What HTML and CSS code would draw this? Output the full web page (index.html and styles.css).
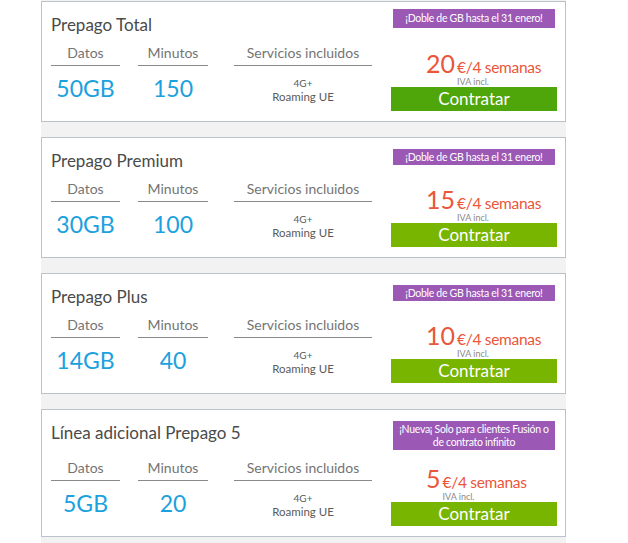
FILE: index.html
```html
<!DOCTYPE html>
<html lang="es">
<head>
<meta charset="utf-8">
<title>Tarifas Prepago</title>
<link rel="stylesheet" href="styles.css">
</head>
<body>
<div class="plans">
  <article class="plan plan--featured">
    <div class="plan-info">
      <h2 class="plan-title">Prepago Total</h2>
      <div class="specs">
        <div class="spec spec--data"><div class="spec-head">Datos</div><div class="spec-value">50GB</div></div>
        <div class="spec spec--min"><div class="spec-head">Minutos</div><div class="spec-value">150</div></div>
        <div class="spec spec--svc"><div class="spec-head">Servicios incluidos</div><div class="spec-value spec-value--list"><span class="svc-4g">4G+</span><span class="svc-roam">Roaming UE</span></div></div>
      </div>
    </div>
    <div class="plan-buy">
      <div class="promo">¡Doble de GB hasta el 31 enero!</div>
      <div class="price"><span class="price-amount">20</span><span class="price-tail"><span class="price-per">€/4 semanas</span><span class="price-vat">IVA incl.</span></span></div>
      <a class="cta" href="#">Contratar</a>
    </div>
  </article>

  <article class="plan">
    <div class="plan-info">
      <h2 class="plan-title">Prepago Premium</h2>
      <div class="specs">
        <div class="spec spec--data"><div class="spec-head">Datos</div><div class="spec-value">30GB</div></div>
        <div class="spec spec--min"><div class="spec-head">Minutos</div><div class="spec-value">100</div></div>
        <div class="spec spec--svc"><div class="spec-head">Servicios incluidos</div><div class="spec-value spec-value--list"><span class="svc-4g">4G+</span><span class="svc-roam">Roaming UE</span></div></div>
      </div>
    </div>
    <div class="plan-buy">
      <div class="promo">¡Doble de GB hasta el 31 enero!</div>
      <div class="price"><span class="price-amount">15</span><span class="price-tail"><span class="price-per">€/4 semanas</span><span class="price-vat">IVA incl.</span></span></div>
      <a class="cta" href="#">Contratar</a>
    </div>
  </article>

  <article class="plan">
    <div class="plan-info">
      <h2 class="plan-title">Prepago Plus</h2>
      <div class="specs">
        <div class="spec spec--data"><div class="spec-head">Datos</div><div class="spec-value">14GB</div></div>
        <div class="spec spec--min"><div class="spec-head">Minutos</div><div class="spec-value">40</div></div>
        <div class="spec spec--svc"><div class="spec-head">Servicios incluidos</div><div class="spec-value spec-value--list"><span class="svc-4g">4G+</span><span class="svc-roam">Roaming UE</span></div></div>
      </div>
    </div>
    <div class="plan-buy">
      <div class="promo">¡Doble de GB hasta el 31 enero!</div>
      <div class="price"><span class="price-amount">10</span><span class="price-tail"><span class="price-per">€/4 semanas</span><span class="price-vat">IVA incl.</span></span></div>
      <a class="cta" href="#">Contratar</a>
    </div>
  </article>

  <article class="plan">
    <div class="plan-info">
      <h2 class="plan-title">Línea adicional Prepago 5</h2>
      <div class="specs">
        <div class="spec spec--data"><div class="spec-head">Datos</div><div class="spec-value">5GB</div></div>
        <div class="spec spec--min"><div class="spec-head">Minutos</div><div class="spec-value">20</div></div>
        <div class="spec spec--svc"><div class="spec-head">Servicios incluidos</div><div class="spec-value spec-value--list"><span class="svc-4g">4G+</span><span class="svc-roam">Roaming UE</span></div></div>
      </div>
    </div>
    <div class="plan-buy">
      <div class="promo">¡Nueva¡ Solo para clientes Fusión o<br>de contrato infinito</div>
      <div class="price"><span class="price-amount">5</span><span class="price-tail"><span class="price-per">€/4 semanas</span><span class="price-vat">IVA incl.</span></span></div>
      <a class="cta" href="#">Contratar</a>
    </div>
  </article>
</div>
</body>
</html>
```
FILE: styles.css
```css
body {
  margin: 0;
  background: #ffffff;
  font-family: Lato, "Noto Sans", sans-serif;
}

.plans {
  margin-left: 41px;
  width: 525px;
  background: #f2f2f2;
  padding: 1px 0 6px;
  display: flex;
  flex-direction: column;
  gap: 15px;
}

.plan {
  display: flex;
  background: #ffffff;
  border: 1px solid #b9c3cd;
  min-height: 119px;
}

.plan-info {
  width: 321px;
  padding: 13px 0 18px 9px;
  display: flex;
  flex-direction: column;
}

.plan-title {
  margin: 0 0 9px;
  font-size: 17px;
  font-weight: 400;
  line-height: 20px;
  color: #4a4a4a;
}

.specs {
  display: flex;
  margin-top: auto;
}

.spec--data { width: 69px; }
.spec--min { width: 70px; margin-left: 18px; }
.spec--svc { width: 138px; margin-left: 26px; }

.spec-head {
  font-size: 14px;
  line-height: 18px;
  color: #747474;
  text-align: center;
  padding-bottom: 3px;
  border-bottom: 1px solid #8a8a8a;
}

.spec-value {
  height: 30px;
  margin-top: 7px;
  display: flex;
  align-items: center;
  justify-content: center;
  font-size: 23px;
  line-height: 28px;
  color: #1ba1de;
}

.spec-value--list {
  box-sizing: border-box;
  flex-direction: column;
  justify-content: flex-start;
  padding-top: 4px;
  color: #5a5a5a;
}

.svc-4g {
  font-size: 10px;
  line-height: 12px;
}

.svc-roam {
  font-size: 11.5px;
  line-height: 15px;
}

.plan-buy {
  width: 166px;
  margin-left: 19px;
  padding: 11px 0 10px;
  display: flex;
  flex-direction: column;
}

.promo {
  margin: 0 2px 15px;
  padding: 1.5px 1px;
  background: #9b58b5;
  color: #ffffff;
  font-size: 10.5px;
  letter-spacing: -0.3px;
  line-height: 13px;
  text-align: center;
  white-space: nowrap;
}

.plan--featured .plan-buy { padding-top: 7px; }
.plan--featured .promo { padding: 3px 1px; }
.plan--featured .cta { background: #4fa60b; }

.price {
  margin-top: auto;
  padding-left: 35px;
  display: flex;
  align-items: baseline;
  color: #ea563a;
}

.price-amount {
  font-size: 25px;
  line-height: 26px;
}

.price-tail {
  display: inline-flex;
  flex-direction: column;
  margin-left: 2px;
}

.price-per {
  font-size: 15.5px;
  letter-spacing: -0.3px;
  line-height: 20px;
}

.price-vat {
  font-size: 9px;
  line-height: 10px;
  color: #8a8a8a;
}

.cta {
  display: block;
  height: 24px;
  line-height: 24px;
  background: #78b500;
  color: #ffffff;
  text-align: center;
  font-size: 17px;
  text-decoration: none;
}
```
